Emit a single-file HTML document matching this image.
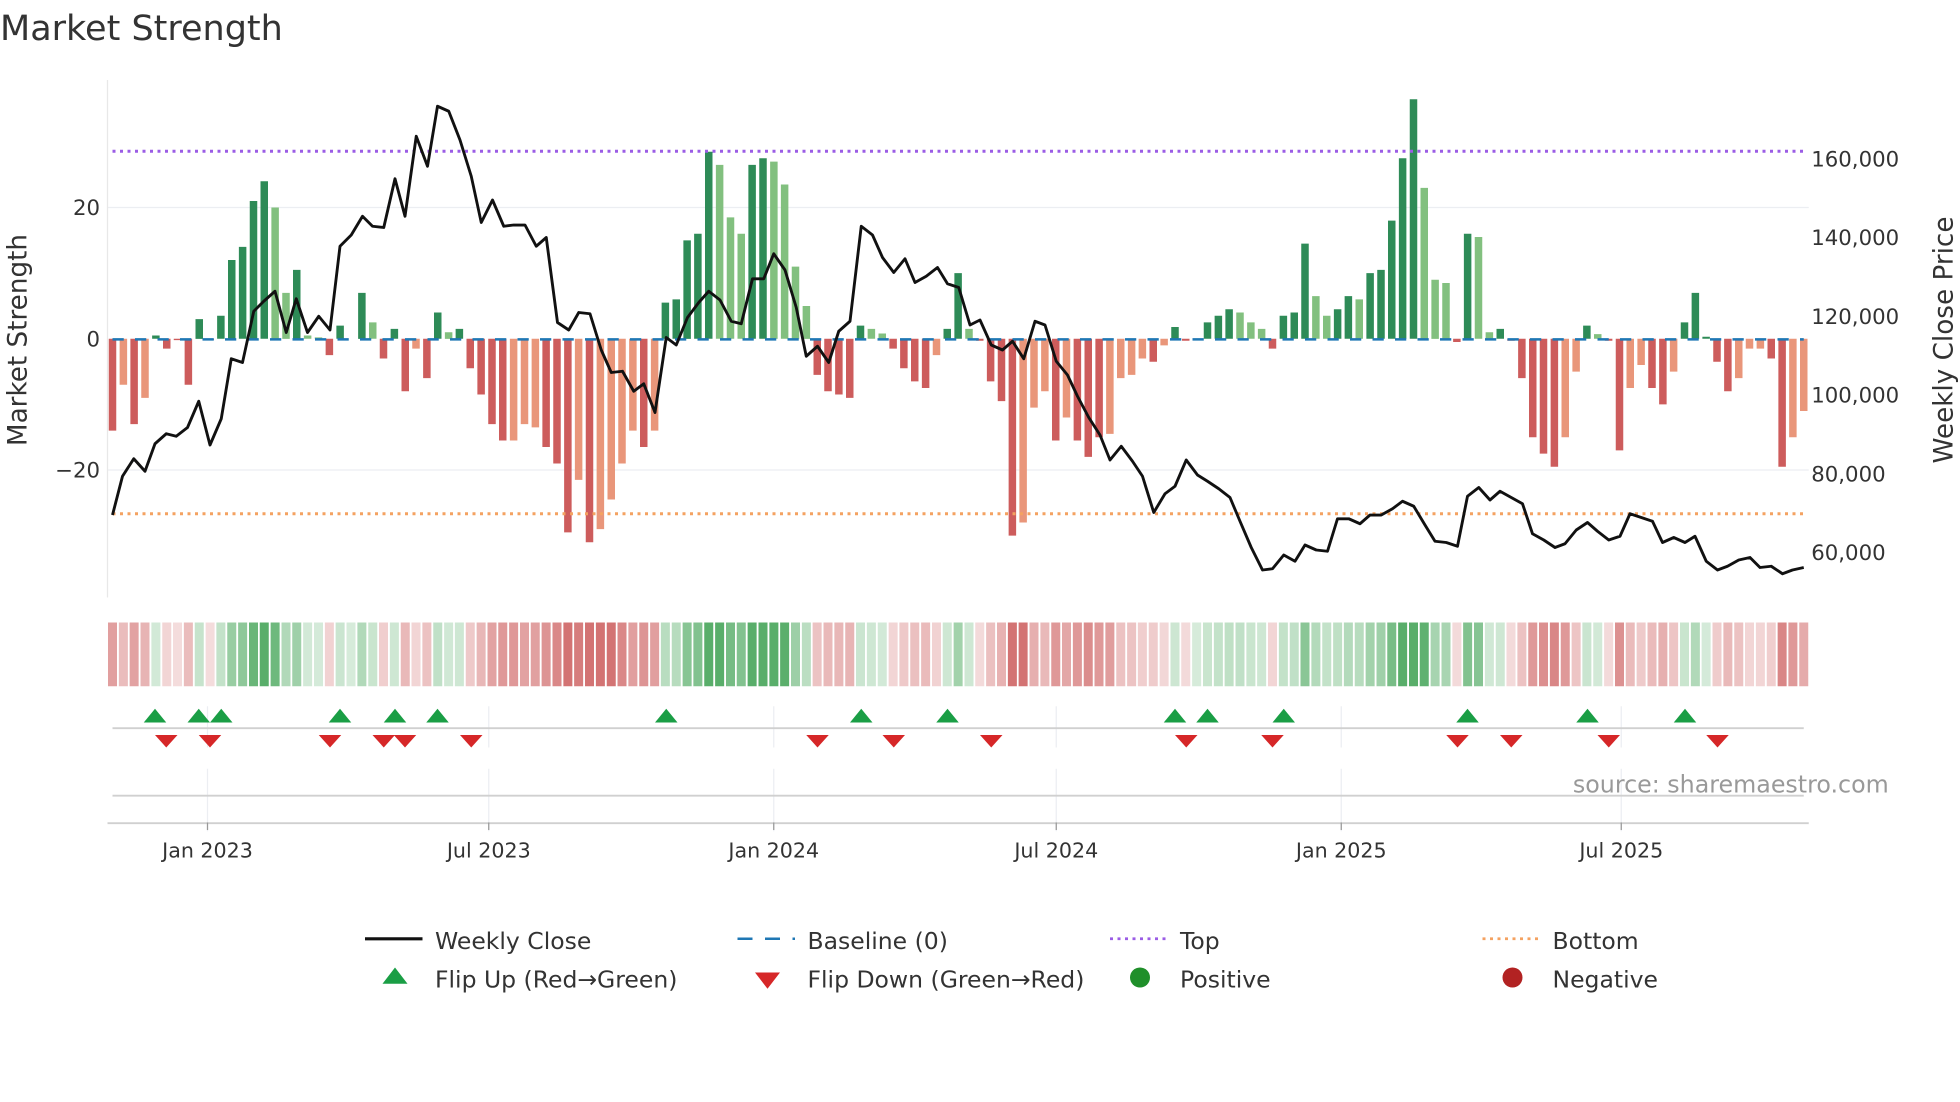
<!DOCTYPE html>
<html><head><meta charset="utf-8"><style>
html,body{margin:0;padding:0;background:#fff;width:1960px;height:1102px;overflow:hidden}
svg{display:block;font-family:"DejaVu Sans","Liberation Sans",sans-serif}
</style></head><body>
<svg id="s" width="1960" height="1102" viewBox="0 0 1568 881.6">
<text x="0" y="32" font-size="28" fill="#333">Market Strength</text>
<g stroke="#eceef2" stroke-width="1">
<line x1="86" y1="166" x2="1447" y2="166"/><line x1="86" y1="376" x2="1447" y2="376"/>
</g>
<line x1="86" y1="64" x2="86" y2="478" stroke="#e8e8e8"/>
<g id="bars"></g>
<line x1="90" y1="121" x2="1443" y2="121" stroke="#9b5de5" stroke-width="2.4" stroke-dasharray="2.4,3.6"/>
<line x1="90" y1="411" x2="1443" y2="411" stroke="#f4a261" stroke-width="2.4" stroke-dasharray="2.4,3.6"/>
<line x1="90" y1="271.5" x2="1443" y2="271.5" stroke="#1f77b4" stroke-width="2" stroke-dasharray="9,9"/>
<polyline id="price" fill="none" stroke="#111" stroke-width="2.3" stroke-linejoin="round"/>
<g font-size="17" fill="#333">
<text x="80" y="172" text-anchor="end">20</text>
<text x="80" y="277" text-anchor="end">0</text>
<text x="80" y="382" text-anchor="end">−20</text>
<text x="1449" y="133">160,000</text><text x="1449" y="196">140,000</text><text x="1449" y="259">120,000</text>
<text x="1449" y="322">100,000</text><text x="1449" y="385">80,000</text><text x="1449" y="448">60,000</text>
<text transform="translate(21,272) rotate(-90)" text-anchor="middle" font-size="21">Market Strength</text>
<text transform="translate(1562,272) rotate(-90)" text-anchor="middle" font-size="21">Weekly Close Price</text>
</g>
<g id="strip"></g>
<g stroke="#eceef2"><line x1="166" y1="565" x2="166" y2="598"/><line x1="391" y1="565" x2="391" y2="598"/><line x1="619" y1="565" x2="619" y2="598"/><line x1="845" y1="565" x2="845" y2="598"/><line x1="1073" y1="565" x2="1073" y2="598"/><line x1="1297" y1="565" x2="1297" y2="598"/>
<line x1="166" y1="615" x2="166" y2="665"/><line x1="391" y1="615" x2="391" y2="665"/><line x1="619" y1="615" x2="619" y2="665"/><line x1="845" y1="615" x2="845" y2="665"/><line x1="1073" y1="615" x2="1073" y2="665"/><line x1="1297" y1="615" x2="1297" y2="665"/></g>
<line x1="90" y1="582.5" x2="1443" y2="582.5" stroke="#d0d0d0" stroke-width="1.5"/>
<line x1="90" y1="636.5" x2="1443" y2="636.5" stroke="#d0d0d0" stroke-width="1.5"/>
<line x1="86" y1="658.5" x2="1447" y2="658.5" stroke="#d0d0d0" stroke-width="1.5"/>
<g id="marks"></g>
<g stroke="#999"><line x1="166" y1="658" x2="166" y2="664"/><line x1="391" y1="658" x2="391" y2="664"/><line x1="619" y1="658" x2="619" y2="664"/><line x1="845" y1="658" x2="845" y2="664"/><line x1="1073" y1="658" x2="1073" y2="664"/><line x1="1297" y1="658" x2="1297" y2="664"/></g>
<g font-size="16.5" fill="#333" text-anchor="middle">
<text x="166" y="686">Jan 2023</text><text x="391" y="686">Jul 2023</text><text x="619" y="686">Jan 2024</text>
<text x="845" y="686">Jul 2024</text><text x="1073" y="686">Jan 2025</text><text x="1297" y="686">Jul 2025</text>
</g>
<text x="1511" y="634" font-size="19" fill="#999" text-anchor="end">source: sharemaestro.com</text>
<g font-size="18.8" fill="#333">
<line x1="292" y1="751" x2="338" y2="751" stroke="#111" stroke-width="2.5"/><text x="348" y="759">Weekly Close</text>
<line x1="590" y1="751" x2="636" y2="751" stroke="#1f77b4" stroke-width="2" stroke-dasharray="12,10"/><text x="646" y="759">Baseline (0)</text>
<line x1="888" y1="751" x2="934" y2="751" stroke="#9b5de5" stroke-width="2.2" stroke-dasharray="2.4,3.6"/><text x="944" y="759">Top</text>
<line x1="1186" y1="751" x2="1232" y2="751" stroke="#f4a261" stroke-width="2.2" stroke-dasharray="2.4,3.6"/><text x="1242" y="759">Bottom</text>
<polygon points="316,774 306,787 326,787" fill="#1a9e45"/><text x="348" y="790">Flip Up (Red→Green)</text>
<polygon points="604,778 624,778 614,791" fill="#d62728"/><text x="646" y="790">Flip Down (Green→Red)</text>
<circle cx="912" cy="782" r="8" fill="#1f8f2a"/><text x="944" y="790">Positive</text>
<circle cx="1210" cy="782" r="8" fill="#b22222"/><text x="1242" y="790">Negative</text>
</g>
</svg>
<script>
var V=[[-14,0],[-7,1],[-13,0],[-9,1],[0.5,0],[-1.5,0],[-0.2,0],[-7,0],[3,0],[-0.2,0],[3.5,0],[12,0],[14,0],[21,0],[24,0],[20,1],[7,1],[10.5,0],[0.5,1],[0.2,1],[-2.5,0],[2,0],[0,0],[7,0],[2.5,1],[-3,0],[1.5,0],[-8,0],[-1.5,1],[-6,0],[4,0],[1,1],[1.5,0],[-4.5,0],[-8.5,0],[-13,0],[-15.5,0],[-15.5,1],[-13,1],[-13.5,1],[-16.5,0],[-19,0],[-29.5,0],[-21.5,1],[-31,0],[-29,1],[-24.5,1],[-19,1],[-14,1],[-16.5,0],[-14,1],[5.5,0],[6,0],[15,0],[16,0],[28.5,0],[26.5,1],[18.5,1],[16,1],[26.5,0],[27.5,0],[27,1],[23.5,1],[11,1],[5,1],[-5.5,0],[-8,0],[-8.5,0],[-9,0],[2,0],[1.5,1],[0.8,1],[-1.5,0],[-4.5,0],[-6.5,0],[-7.5,0],[-2.5,1],[1.5,0],[10,0],[1.5,1],[-0.3,0],[-6.5,0],[-9.5,0],[-30,0],[-28,1],[-10.5,1],[-8,1],[-15.5,0],[-12,1],[-15.5,0],[-18,0],[-15,0],[-14.5,1],[-6,1],[-5.5,1],[-3,1],[-3.5,0],[-1,1],[1.8,0],[-0.3,0],[0,0],[2.5,0],[3.5,0],[4.5,0],[4,1],[2.5,1],[1.5,1],[-1.5,0],[3.5,0],[4,0],[14.5,0],[6.5,1],[3.5,1],[4.5,0],[6.5,0],[6,1],[10,0],[10.5,0],[18,0],[27.5,0],[36.5,0],[23,1],[9,1],[8.5,1],[-0.5,0],[16,0],[15.5,1],[1,1],[1.5,0],[-0.3,0],[-6,0],[-15,0],[-17.5,0],[-19.5,0],[-15,1],[-5,1],[2,0],[0.7,1],[-0.3,0],[-17,0],[-7.5,1],[-4,1],[-7.5,0],[-10,0],[-5,1],[2.5,0],[7,0],[0.3,0],[-3.5,0],[-8,0],[-6,1],[-1.5,1],[-1.5,1],[-3,0],[-19.5,0],[-15,1],[-11,1]];
var n=V.length,x0=90,dx=(1443-90)/(n-1),b='',s='';
V.forEach(function(v,i){var x=x0+i*dx,h=Math.abs(v[0])*5.25,c=v[0]>=0?(v[1]?'#82c07f':'#2e8b57'):(v[1]?'#e9967a':'#cd5c5c');
if(h>0.5)b+='<rect x="'+(x-3).toFixed(1)+'" y="'+(v[0]>=0?271-h:271).toFixed(1)+'" width="6" height="'+h.toFixed(1)+'" fill="'+c+'"/>';
var a=Math.min(0.25+Math.abs(v[0])/32,1);var sc=v[0]>=0?'rgba(60,160,80,'+(a*0.85).toFixed(2)+')':'rgba(200,80,80,'+(a*0.8).toFixed(2)+')';
s+='<rect x="'+(x-3.6).toFixed(1)+'" y="498" width="7.2" height="51" fill="'+sc+'"/>';});
document.getElementById('bars').innerHTML=b;document.getElementById('strip').innerHTML=s;
var P="90,412 98,381 107,367 116,377 124,355 133,347 141,349 150,342 159,321 168,356 177,335 185,287 194,290 203,249 211,241 220,233 229,266 237,239 246,266 255,253 264,264 272,197 281,188 290,173 298,181 307,182 316,143 324,173 333,109 342,133 350,85 359,89 368,112 377,141 385,178 394,160 403,181 411,180 420,180 429,197 437,190 446,258 455,264 463,250 472,251 481,280 489,298 498,297 507,313 515,307 524,330 533,270 541,276 550,254 559,242 567,233 576,240 585,257 593,259 602,223 611,223 619,203 628,216 637,246 645,285 654,277 663,290 671,265 680,257 689,181 698,188 706,206 715,218 724,207 732,226 741,221 750,214 758,227 767,230 776,260 784,256 793,276 802,280 810,273 819,287 828,257 836,260 845,289 854,300 862,317 871,334 880,348 888,368 897,357 906,369 914,381 923,410 932,395 940,389 949,368 958,380 966,385 975,391 984,398 992,417 1001,438 1010,456 1018,455 1027,444 1036,449 1044,436 1053,440 1062,441 1070,415 1079,415 1088,419 1096,412 1105,412 1114,407 1122,401 1131,405 1140,420 1148,433 1157,434 1166,437 1174,397 1183,390 1192,400 1200,393 1209,398 1218,403 1226,427 1235,432 1244,438 1252,435 1261,424 1270,418 1278,425 1287,432 1296,429 1304,411 1313,414 1322,417 1330,434 1339,430 1348,434 1356,429 1365,449 1374,456 1382,453 1391,448 1400,446 1408,454 1417,453 1426,459 1434,456 1443,454";
document.getElementById('price').setAttribute('points',P);
var up=[124,159,177,272,316,350,533,689,758,940,966,1027,1174,1270,1348],dn=[133,168,264,307,324,377,654,715,793,949,1018,1166,1209,1287,1374],m='';
up.forEach(function(x){m+='<polygon points="'+x+',567 '+(x-9)+',578 '+(x+9)+',578" fill="#1a9e45"/>';});
dn.forEach(function(x){m+='<polygon points="'+(x-9)+',588 '+(x+9)+',588 '+x+',598" fill="#d62728"/>';});
document.getElementById('marks').innerHTML=m;
</script>
</body></html>
